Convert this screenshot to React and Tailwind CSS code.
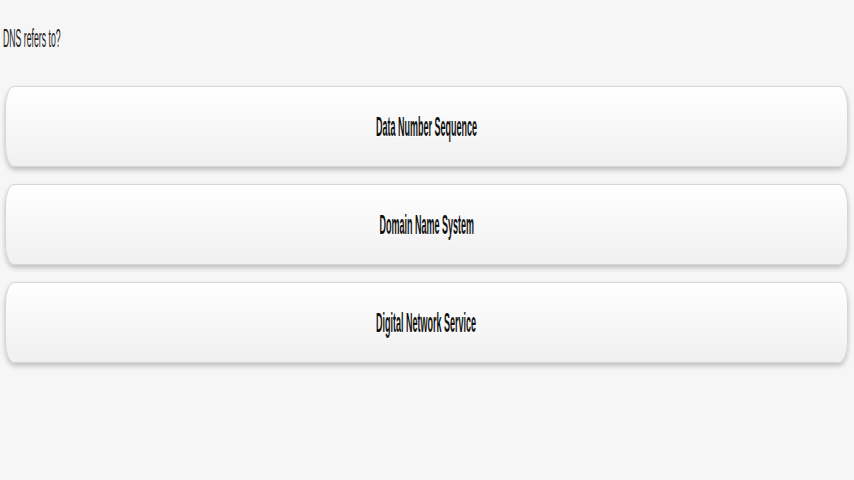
export default function App() {
  const options = ["Data Number Sequence", "Domain Name System", "Digital Network Service"];
  return (
    <div className="min-h-screen w-full bg-[#f6f6f6] font-['Liberation_Sans',Arial,sans-serif] overflow-hidden">
      <div className="pt-[25px] pl-[3px] h-[51px]">
        <span className="inline-block origin-left scale-x-[0.335] text-[26px] leading-[26px] text-[#222] whitespace-nowrap">
          DNS refers to?
        </span>
      </div>
      <div className="mt-[35px] flex flex-col gap-[17px] pl-[5px] pr-[6px]">
        {options.map((o) => (
          <button
            key={o}
            className="h-[81px] w-full flex items-center justify-center border border-[#d6d6d6] rounded-[9px_/_22px] bg-gradient-to-b from-[#ffffff] to-[#f0f0f0] shadow-[0_3px_5px_rgba(0,0,0,0.22)]"
          >
            <span className="inline-block origin-center scale-x-[0.333] text-[27px] leading-[27px] pt-[2px] font-bold text-[#111] whitespace-nowrap [text-shadow:0_1px_0_#fff]">
              {o}
            </span>
          </button>
        ))}
      </div>
    </div>
  );
}
